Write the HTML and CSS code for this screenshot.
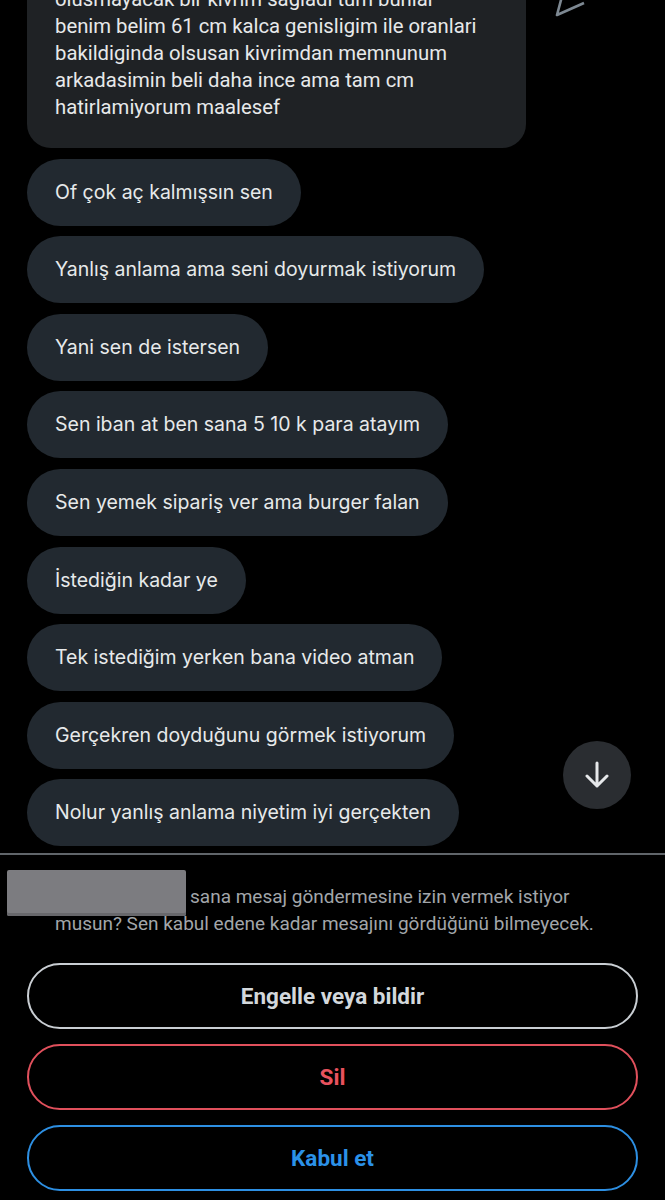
FILE: index.html
```html
<!DOCTYPE html>
<html lang="tr">
<head>
    <meta charset="UTF-8">
    <meta name="viewport" content="width=device-width, initial-scale=1.0">
    <title>Mesaj isteği</title>
    <link rel="stylesheet" href="styles.css">
</head>
<body>
    <main class="chat">
        <div class="messages">
            <div class="row-first">
                <div class="bubble long">
                    olusmayacak bir kivrim sagladi tum bunlar<br>
                    benim belim 61 cm kalca genisligim ile oranlari<br>
                    bakildiginda olsusan kivrimdan memnunum<br>
                    arkadasimin beli daha ince ama tam cm<br>
                    hatirlamiyorum maalesef
                </div>
                <svg class="send-icon" width="30" height="30" viewBox="0 0 30 30">
                    <path d="M10 -2 L2 28 L29 16" fill="none" stroke="#7d8892" stroke-width="2.6" stroke-linejoin="round"/>
                </svg>
            </div>
            <div class="bubble">Of çok aç kalmışsın sen</div>
            <div class="bubble">Yanlış anlama ama seni doyurmak istiyorum</div>
            <div class="bubble">Yani sen de istersen</div>
            <div class="bubble">Sen iban at ben sana 5 10 k para atayım</div>
            <div class="bubble">Sen yemek sipariş ver ama burger falan</div>
            <div class="bubble">İstediğin kadar ye</div>
            <div class="bubble">Tek istediğim yerken bana video atman</div>
            <div class="bubble">Gerçekren doyduğunu görmek istiyorum</div>
            <div class="bubble">Nolur yanlış anlama niyetim iyi gerçekten</div>
        </div>
        <button class="scroll-down" aria-label="Aşağı kaydır">
            <svg width="30" height="30" viewBox="0 0 30 30">
                <path d="M15 3 V26 M5 16 L15 26 L25 16" fill="none" stroke="#e6e8ea" stroke-width="3" stroke-linecap="round" stroke-linejoin="round"/>
            </svg>
        </button>
    </main>

    <section class="request">
        <p class="request-text"><span class="redacted"></span>sana mesaj göndermesine izin vermek istiyor musun? Sen kabul edene kadar mesajını gördüğünü bilmeyecek.</p>
        <div class="actions">
            <button class="action block">Engelle veya bildir</button>
            <button class="action delete">Sil</button>
            <button class="action accept">Kabul et</button>
        </div>
    </section>
</body>
</html>
```

FILE: styles.css
```css
body {
    background: #000;
    color: #e7e9ea;
    font-family: Inter, "Noto Sans", sans-serif;
    margin: 0;
    padding: 0;
    height: 1200px;
    overflow: hidden;
}

.chat {
    position: relative;
    height: 846px;
    overflow: hidden;
}

.messages {
    display: flex;
    flex-direction: column;
    align-items: flex-start;
    gap: 10.6px;
    padding: 0 27px;
    margin-top: -30px;
}

.row-first {
    display: flex;
    align-items: flex-start;
}

.bubble {
    background: #222930;
    border-radius: 34px;
    padding: 20px 28px;
    font-size: 19.5px;
    line-height: 27px;
    white-space: nowrap;
}

.bubble.long {
    background: #1f2225;
    border-radius: 24px;
    width: 443px;
    padding: 16px 28px 27px;
    font-family: Roboto, "Noto Sans", sans-serif;
    font-size: 20.3px;
}

.send-icon {
    margin: 17px 0 0 29px;
}

.scroll-down {
    position: absolute;
    left: 563px;
    top: 741px;
    width: 68px;
    height: 68px;
    border: none;
    border-radius: 50%;
    background: #2a2d31;
    display: flex;
    align-items: center;
    justify-content: center;
    padding: 0;
}

.request {
    border-top: 2px solid #60656a;
    margin-top: 7px;
    padding-top: 28px;
}

.request-text {
    margin: 0;
    padding: 0 30px 0 55px;
    font-family: Roboto, "Noto Sans", sans-serif;
    font-size: 19px;
    line-height: 27px;
    color: #a2a6aa;
}

.redacted {
    display: inline-block;
    vertical-align: top;
    width: 179px;
    height: 46px;
    margin: -13.5px 4px -5.5px -48px;
    background: #7c7c80;
    border-radius: 2px;
    box-shadow: inset 0 -3px 0 #68686c;
}

.actions {
    display: flex;
    flex-direction: column;
    gap: 15px;
    padding: 26px 27px 0;
}

.action {
    height: 66px;
    border-radius: 33px;
    background: #000;
    border: 2px solid #c9ced3;
    font-family: Roboto, "Noto Sans", sans-serif;
    font-weight: bold;
    font-size: 22.5px;
    color: #d3d8dc;
    cursor: pointer;
}

.action.delete {
    border-color: #e0505c;
    color: #e8525e;
}

.action.accept {
    border-color: #2d8fe2;
    color: #2b91e8;
}
```
